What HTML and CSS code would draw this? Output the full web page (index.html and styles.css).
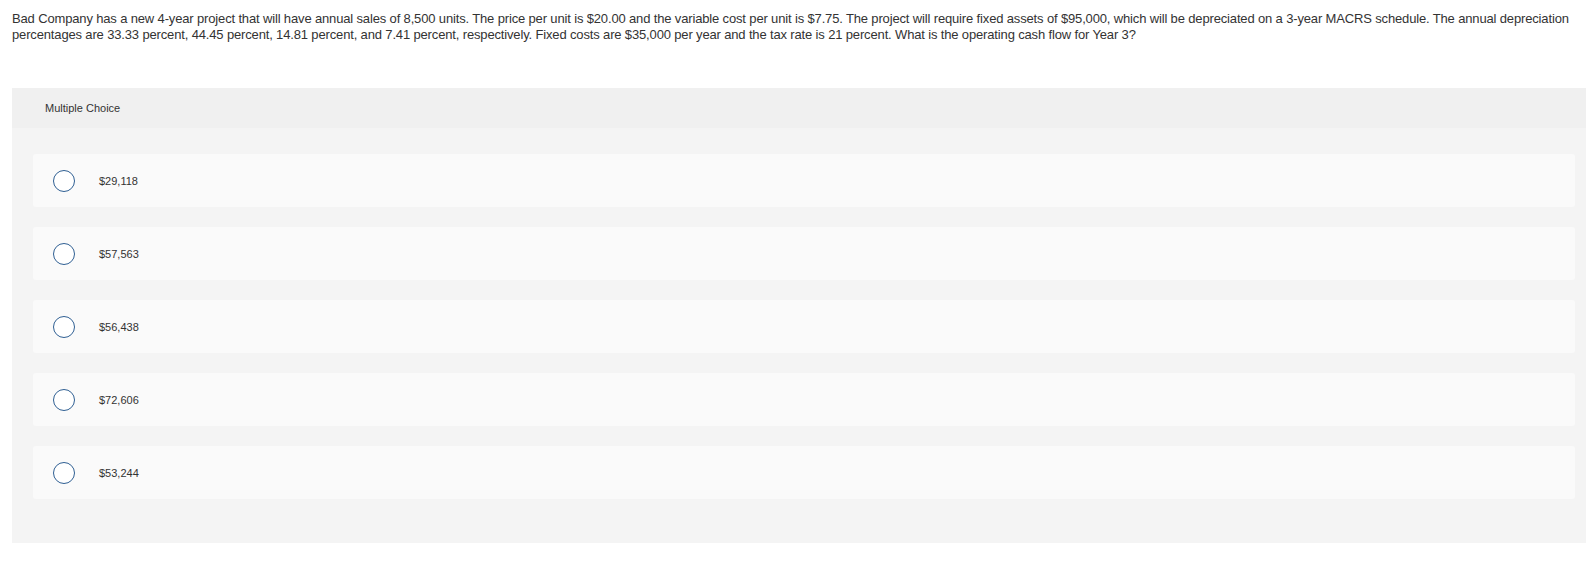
FILE: index.html
```html
<!DOCTYPE html>
<html>
<head>
<meta charset="utf-8">
<link rel="stylesheet" href="styles.css">
</head>
<body>
<p class="question">Bad Company has a new 4-year project that will have annual sales of 8,500 units. The price per unit is $20.00 and the variable cost per unit is $7.75. The project will require fixed assets of $95,000, which will be depreciated on a 3-year MACRS schedule. The annual depreciation percentages are 33.33 percent, 44.45 percent, 14.81 percent, and 7.41 percent, respectively. Fixed costs are $35,000 per year and the tax rate is 21 percent. What is the operating cash flow for Year 3?</p>
<section class="mc">
  <div class="mc-header">Multiple Choice</div>
  <div class="mc-body">
    <label class="option"><span class="radio"></span><span class="opt-text">$29,118</span></label>
    <label class="option"><span class="radio"></span><span class="opt-text">$57,563</span></label>
    <label class="option"><span class="radio"></span><span class="opt-text">$56,438</span></label>
    <label class="option"><span class="radio"></span><span class="opt-text">$72,606</span></label>
    <label class="option"><span class="radio"></span><span class="opt-text">$53,244</span></label>
  </div>
</section>
</body>
</html>
```
FILE: styles.css
```css
html, body {
  margin: 0;
  padding: 0;
  background: #ffffff;
}
body {
  font-family: "Liberation Sans", Arial, sans-serif;
  color: #333333;
}
.question {
  margin: 0;
  padding: 11px 12px 0 12px;
  font-size: 13px;
  line-height: 16px;
  letter-spacing: -0.15px;
  color: #333333;
}
.mc {
  margin: 45px 0 0 12px;
}
.mc-header {
  height: 40px;
  background: #f0f0f0;
  display: flex;
  align-items: center;
  padding-left: 33px;
  font-size: 11px;
  color: #333333;
}
.mc-body {
  background: #f4f4f4;
  padding: 26px 11px 44px 21px;
  display: flex;
  flex-direction: column;
  gap: 20px;
}
.option {
  height: 53px;
  background: #fafafa;
  border-radius: 3px;
  display: flex;
  align-items: center;
  padding-left: 20px;
  gap: 24px;
}
.radio {
  width: 20px;
  height: 20px;
  border: 1.5px solid #2f5f93;
  border-radius: 50%;
  background: #ffffff;
  flex: none;
}
.opt-text {
  font-size: 11px;
  color: #333333;
}
```
